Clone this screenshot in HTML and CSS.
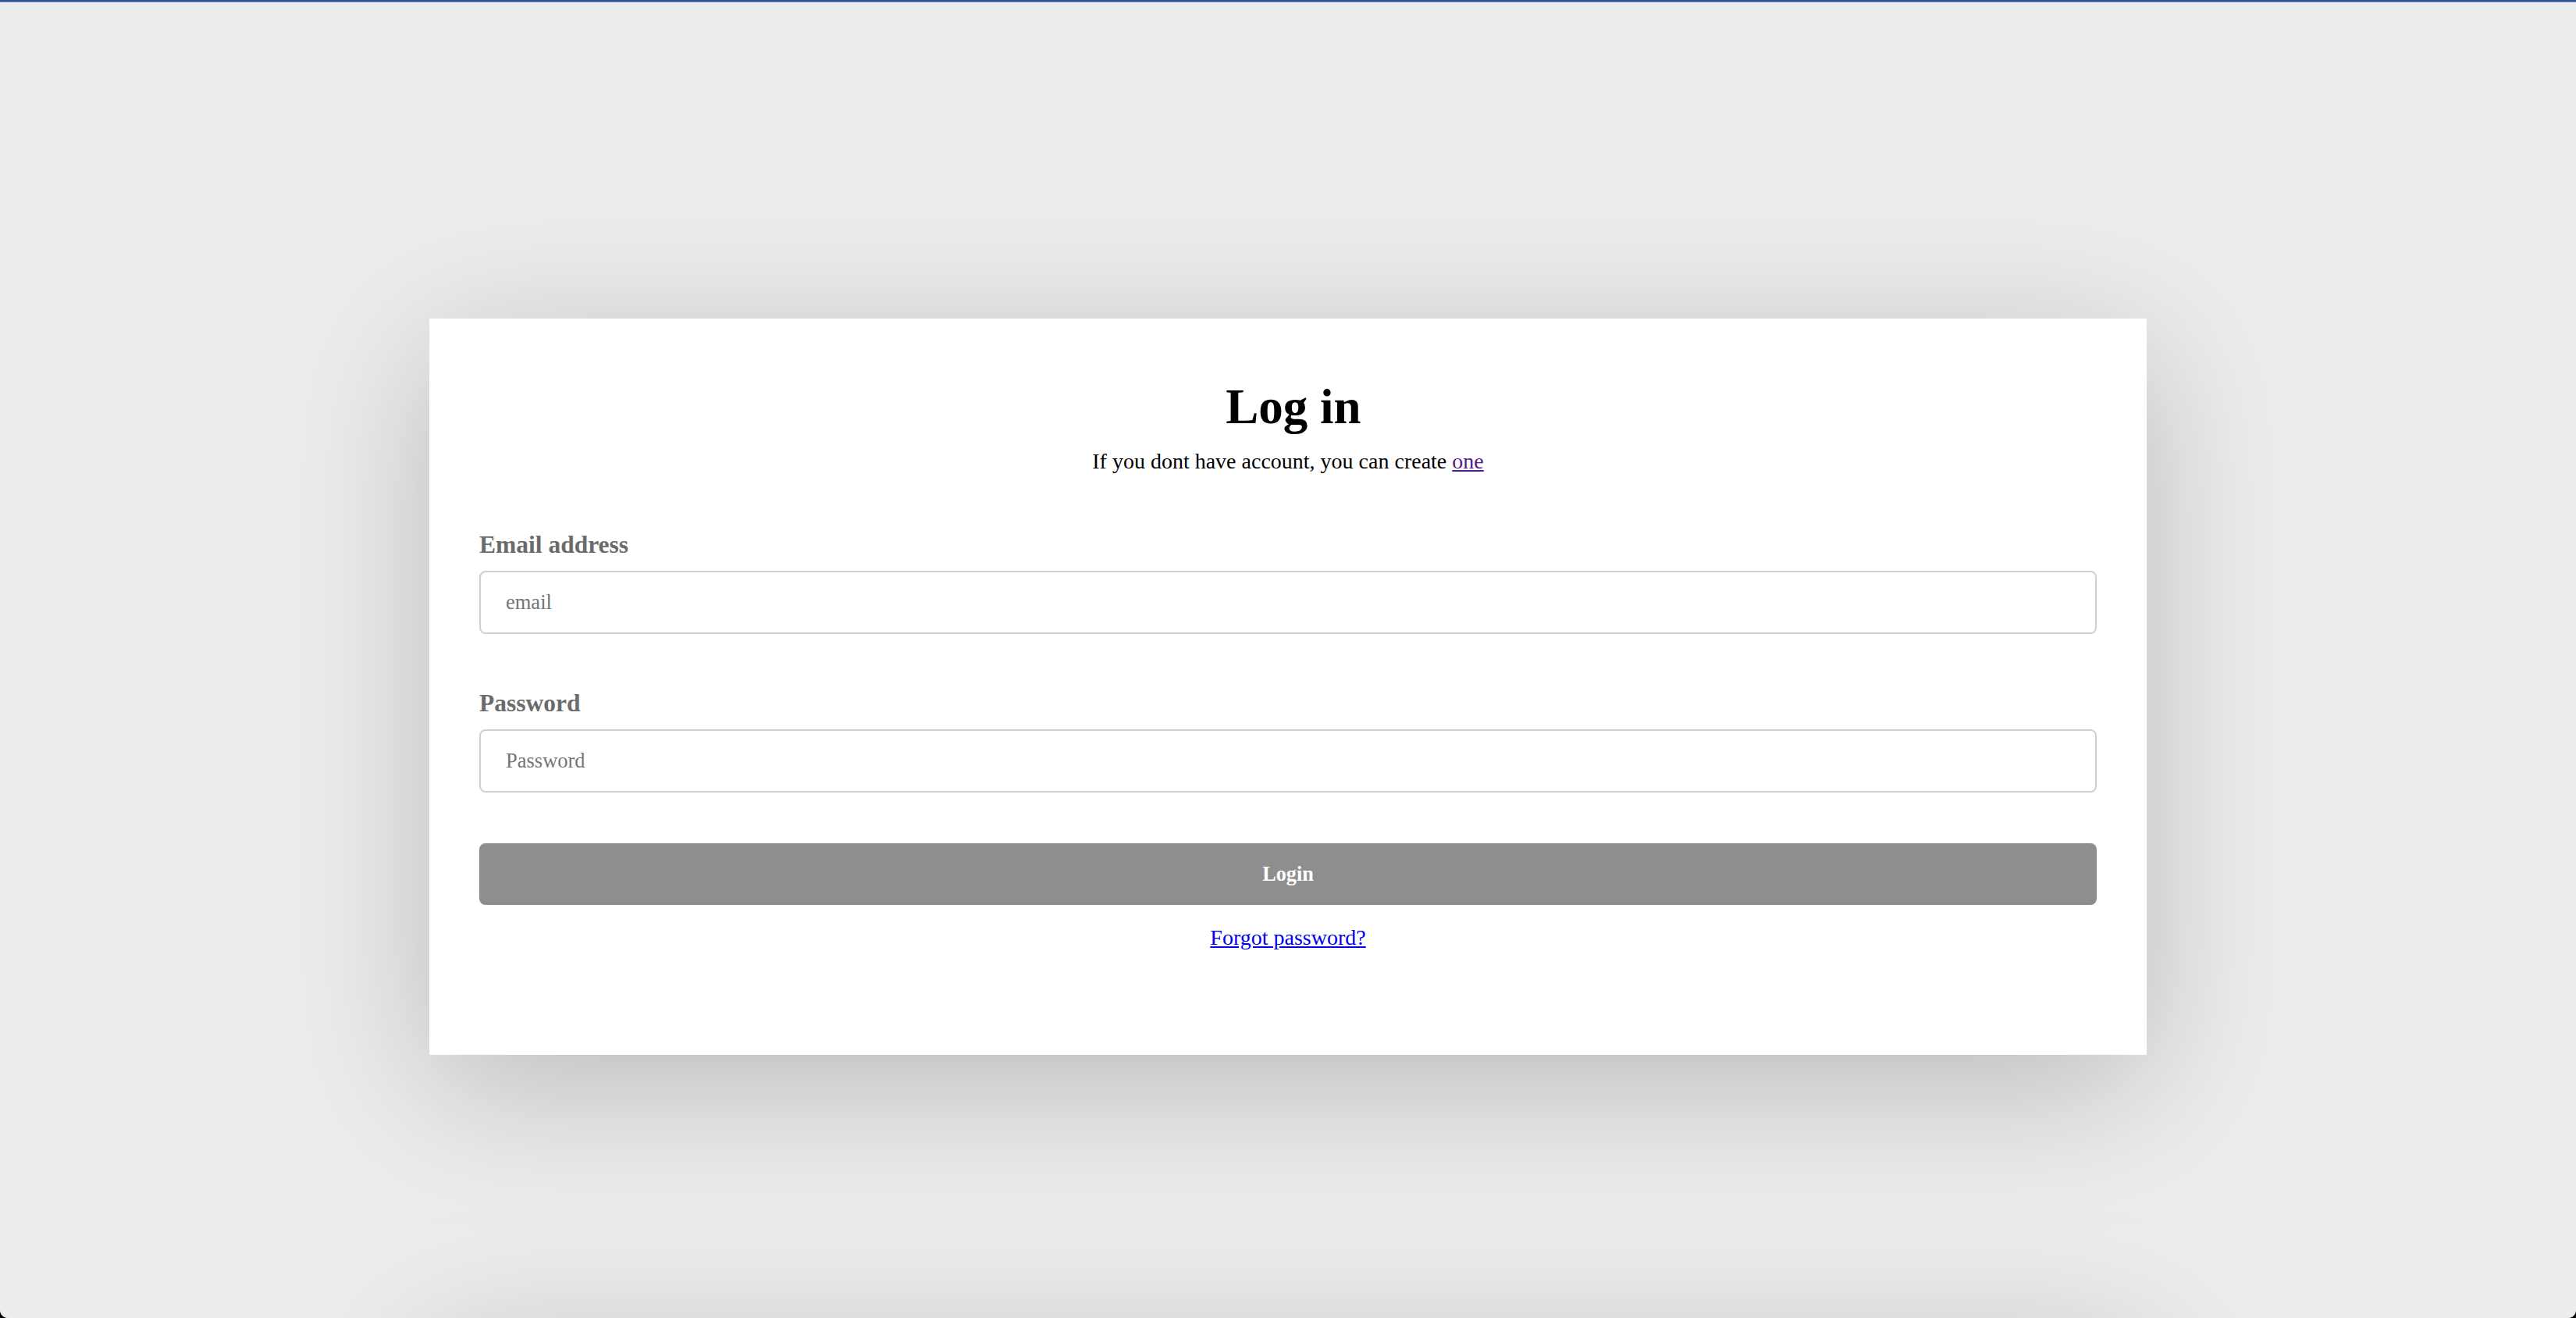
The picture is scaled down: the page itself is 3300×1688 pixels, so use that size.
FILE: index.html
```html
<!DOCTYPE html>
<html lang="en">
<head>
<meta charset="utf-8">
<title>Log in</title>
<link rel="stylesheet" href="styles.css">
</head>
<body>
<div class="topbar"></div>
<main class="page">
  <section class="card">
    <h1 class="title">Log in</h1>
    <p class="subtitle">If you dont have account, you can create <a href="#" class="visited-link">one</a></p>
    <form class="form">
      <div class="field">
        <label class="label" for="email">Email address</label>
        <input class="input" id="email" type="email" placeholder="email">
      </div>
      <div class="field">
        <label class="label" for="password">Password</label>
        <input class="input" id="password" type="password" placeholder="Password">
      </div>
      <button class="btn" type="button">Login</button>
      <a href="#" class="forgot">Forgot password?</a>
    </form>
  </section>
  <section class="card card-next"></section>
</main>
<div class="corners"></div>
</body>
</html>
```

FILE: styles.css
```css
html, body {
  margin: 0;
  padding: 0;
}
body {
  background: #ededed;
  font-family: "Liberation Serif", "Times New Roman", serif;
  color: #000;
}
.topbar {
  height: 3px;
  background: linear-gradient(to bottom, #2d5495 0, #2d5495 2px, #7690bd 2px, #7690bd 3px);
}
.page {
  padding-top: 405px;
  display: flex;
  flex-direction: column;
  align-items: center;
}
.card {
  box-sizing: border-box;
  width: 2200px;
  height: 943px;
  background: #fff;
  box-shadow: 0 40px 180px rgba(0, 0, 0, 0.22);
  padding: 77px 64px 0;
  display: flex;
  flex-direction: column;
}
.card-next {
  margin-top: 345px;
}
.title {
  margin: 0;
  font-size: 63px;
  line-height: 72px;
  font-weight: bold;
  text-align: center;
  padding-left: 14px;
}
.subtitle {
  margin: 18px 0 0;
  font-size: 28px;
  line-height: 32px;
  text-align: center;
}
.visited-link {
  color: #551a8b;
}
.form {
  display: flex;
  flex-direction: column;
  margin-top: 73px;
}
.field {
  display: flex;
  flex-direction: column;
  gap: 15px;
  margin-bottom: 71px;
}
.field + .field {
  margin-bottom: 65px;
}
.label {
  font-size: 31.5px;
  line-height: 36px;
  font-weight: bold;
  color: #6b6b6b;
}
.input {
  box-sizing: border-box;
  height: 81px;
  width: 100%;
  border: 2px solid #d0d0d0;
  border-radius: 8px;
  padding: 0 32px;
  font-family: "Liberation Serif", "Times New Roman", serif;
  font-size: 26.5px;
  color: #222;
  background: #fff;
  outline: none;
}
.input::placeholder {
  color: #757575;
}
.btn {
  height: 79px;
  border: none;
  border-radius: 8px;
  background: #8e8e8e;
  color: #fff;
  font-family: "Liberation Serif", "Times New Roman", serif;
  font-size: 26.25px;
  font-weight: bold;
  cursor: pointer;
}
.forgot {
  margin-top: 26px;
  align-self: center;
  font-size: 28px;
  line-height: 32px;
  color: #0000ee;
}
.corners {
  position: fixed;
  left: 0;
  right: 0;
  bottom: 0;
  height: 10px;
  pointer-events: none;
}
.corners::before,
.corners::after {
  content: "";
  position: absolute;
  bottom: 0;
  width: 10px;
  height: 10px;
}
.corners::before {
  left: 0;
  background: radial-gradient(circle at 100% 0, transparent 9.5px, #000 10.5px);
}
.corners::after {
  right: 0;
  background: radial-gradient(circle at 0 0, transparent 9.5px, #000 10.5px);
}
```
